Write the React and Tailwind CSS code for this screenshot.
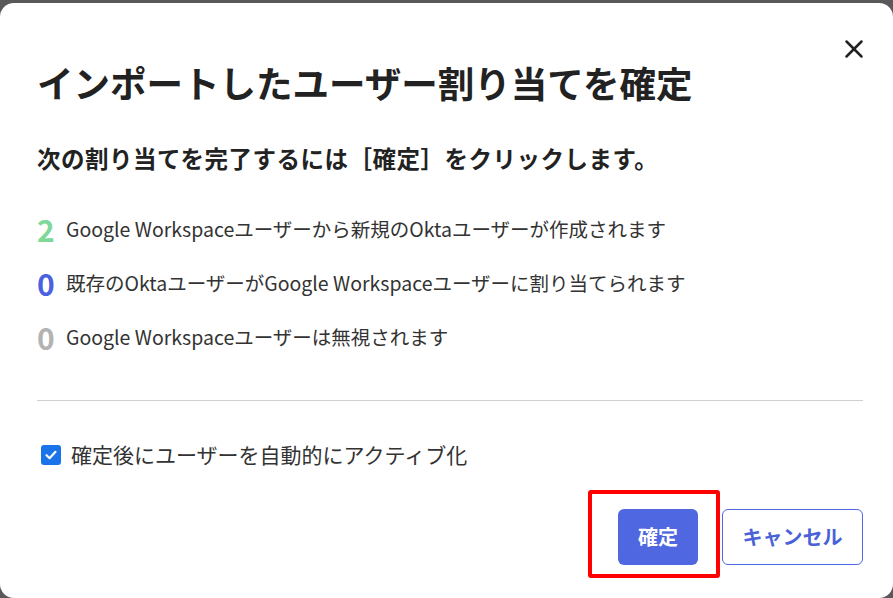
import { X } from "lucide-react";

const ROWS = [
  { n: "2", color: "text-[#7dd89a]", text: "Google Workspaceユーザーから新規のOktaユーザーが作成されます" },
  { n: "0", color: "text-[#4a62e0]", text: "既存のOktaユーザーがGoogle Workspaceユーザーに割り当てられます" },
  { n: "0", color: "text-[#b3b3b3]", text: "Google Workspaceユーザーは無視されます" },
];

export default function App() {
  return (
    <div
      className="h-[598px] w-[893px] overflow-hidden bg-[#595959] pt-[3px]"
      style={{ fontFamily: '"Noto Sans CJK JP", "Noto Sans", sans-serif' }}
    >
      <div className="relative flex h-[595px] flex-col rounded-[14px] bg-white pl-[37px] pr-[30px] pt-[59px] text-[#222]">
        <button className="absolute right-[24px] top-[31px] text-[#222]">
          <X size={30} strokeWidth={2} />
        </button>

        <h1 className="h-[42px] text-[36.5px] font-bold leading-[42px]">
          インポートしたユーザー割り当てを確定
        </h1>

        <p className="mt-[38px] h-[32px] text-[23.5px] font-bold leading-[32px] tracking-[0.5px]">
          次の割り当てを完了するには［確定］をクリックします。
        </p>

        <div className="mt-[28px] flex flex-col">
          {ROWS.map((r, i) => (
            <div key={i} className="flex h-[54px] items-center">
              <span className={`w-[29px] text-[30px] font-bold leading-none ${r.color}`}>{r.n}</span>
              <span className="text-[19.5px] text-[#333]">{r.text}</span>
            </div>
          ))}
        </div>

        <div className="mt-[36px] h-px bg-[#cfcfcf]" />

        <label className="mt-[40px] flex h-[28px] items-center gap-[10px] pl-[4px]">
          <span className="flex h-[20px] w-[20px] items-center justify-center rounded-[3px] bg-[#1a73e8]">
            <svg width="14" height="14" viewBox="0 0 14 14" fill="none">
              <path d="M2.5 7.2 L5.6 10.2 L11.5 3.8" stroke="white" strokeWidth="2.2" strokeLinecap="round" strokeLinejoin="round" />
            </svg>
          </span>
          <span className="text-[21px] text-[#333]">確定後にユーザーを自動的にアクティブ化</span>
        </label>

        <div className="mt-[40px] flex justify-end gap-[24px]">
          <div className="relative">
            <button className="h-[56px] w-[80px] rounded-[6px] bg-[#4f67e0] text-[20px] font-bold text-white">
              確定
            </button>
            <span className="pointer-events-none absolute -bottom-[13px] -left-[30px] -right-[22px] -top-[19px] rounded-[3px] border-[4px] border-[#ff0000]" />
          </div>
          <button className="h-[56px] w-[141px] rounded-[6px] border border-[#4f67e0] bg-white text-[20px] font-bold text-[#4a62d8]">
            キャンセル
          </button>
        </div>
      </div>
    </div>
  );
}
